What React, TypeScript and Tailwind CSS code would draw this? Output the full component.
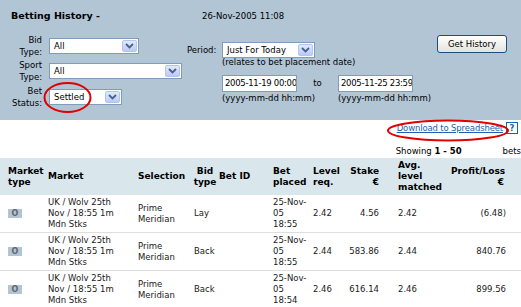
import React from "react";

function Chevron() {
  return (
    <svg width="9" height="6" viewBox="0 0 9 6">
      <path d="M1 1 L4.5 4.5 L8 1" fill="none" stroke="#4d6185" strokeWidth="1.8" />
    </svg>
  );
}

function Select({ cls, value }: { cls: string; value: string }) {
  return (
    <div className={"flex h-[16px] items-center border border-[#7f9db9] bg-white " + cls}>
      <div className="flex-1 whitespace-nowrap pl-[4px] leading-[12px]">{value}</div>
      <div className="mr-[1px] flex h-[12px] w-[15px] items-center justify-center rounded-[2px] border border-[#b2c5f2] bg-linear-to-b from-[#e1e9fd] to-[#b8cbf6]">
        <Chevron />
      </div>
    </div>
  );
}

function Label({ a, b }: { a: string; b: string }) {
  return (
    <div className="w-[44px] pr-[2px] text-right leading-[12px]">
      {a}
      <br />
      {b}
    </div>
  );
}

const rows = [
  { bid: "Lay", placed: "18:55", lvl: "2.42", stake: "4.56", avg: "2.42", pl: "(6.48)" },
  { bid: "Back", placed: "18:55", lvl: "2.44", stake: "583.86", avg: "2.44", pl: "840.76" },
  { bid: "Back", placed: "18:54", lvl: "2.46", stake: "616.14", avg: "2.46", pl: "899.56" },
];

const grid =
  "grid grid-cols-[40px_90px_53px_28px_54px_40px_30px_36px_72px_56px] pl-[8px] items-center";

export default function App() {
  return (
    <div className="relative h-[307px] w-[521px] overflow-hidden bg-white font-['DejaVu_Sans',sans-serif] text-[8.5px] leading-[11px] text-black">
      <div className="h-[120px] bg-[#b1c5d5]">
        <div className="flex pt-[10px]">
          <div className="w-[202px] pl-[11px] text-[9.5px] font-bold leading-[12px]">Betting History -</div>
          <div className="leading-[12px]">26-Nov-2005 11:08</div>
        </div>
        <div className="mt-[12px] flex">
          <div className="flex w-[187px] flex-col">
            <div className="flex h-[25px] items-start">
              <Label a="Bid" b="Type:" />
              <Select cls="ml-[5px] mt-[4px] w-[90px]" value="All" />
            </div>
            <div className="flex h-[26px] items-start">
              <Label a="Sport" b="Type:" />
              <Select cls="ml-[5px] mt-[4px] w-[133px]" value="All" />
            </div>
            <div className="flex h-[26px] items-start">
              <Label a="Bet" b="Status:" />
              <Select cls="ml-[5px] mt-[4px] w-[73px]" value="Settled" />
            </div>
          </div>
          <div className="flex w-[250px] flex-col">
            <div className="mt-[8px] flex h-[16px] items-center">
              <div className="w-[35px] leading-[12px]">Period:</div>
              <Select cls="w-[93px]" value="Just For Today" />
            </div>
            <div className="-mt-[1px] whitespace-nowrap pl-[35px]">(relates to bet placement date)</div>
            <div className="mt-[7px] flex items-center pl-[35px]">
              <div className="flex h-[17px] w-[75px] items-center overflow-hidden whitespace-nowrap border border-[#7f9db9] bg-white pl-[2px] tracking-[-0.3px]">
                2005-11-19 00:00
              </div>
              <div className="w-[41px] text-center">to</div>
              <div className="flex h-[17px] w-[75px] items-center overflow-hidden whitespace-nowrap border border-[#7f9db9] bg-white pl-[2px] tracking-[-0.3px]">
                2005-11-25 23:59
              </div>
            </div>
            <div className="mt-[1px] flex whitespace-nowrap pl-[35px]">
              <div className="w-[116px]">(yyyy-mm-dd hh:mm)</div>
              <div>(yyyy-mm-dd hh:mm)</div>
            </div>
          </div>
          <div className="mt-[1px]">
            <div className="flex h-[18px] w-[70px] items-center justify-center rounded-[3px] border border-[#1c4f7e] bg-linear-to-b from-white to-[#e4e4dc]">
              Get History
            </div>
          </div>
        </div>
      </div>

      <div className="mt-[2px] flex items-center justify-end pr-[3px] leading-[12px]">
        <span className="tracking-[-0.15px] text-[#1f5fb0] underline">Download to Spreadsheet</span>
        <span className="ml-[3px] flex h-[12px] w-[12px] items-center justify-center border border-[#1f5fb0] bg-white font-bold text-[#1f5fb0]">
          ?
        </span>
      </div>
      <div className="mt-[11px] flex leading-[12px]">
        <div className="w-[396px]" />
        <div className="w-[107px]">
          Showing <span className="font-bold">1 - 50</span>
        </div>
        <div>bets</div>
      </div>

      <div className={grid + " mt-[1px] h-[37px] bg-[#d9e6eb] text-[9px] font-bold"}>
        <div>
          Market
          <br />
          type
        </div>
        <div>Market</div>
        <div>Selection</div>
        <div className="text-center">
          Bid
          <br />
          type
        </div>
        <div>Bet ID</div>
        <div>
          Bet
          <br />
          placed
        </div>
        <div>
          Level
          <br />
          req.
        </div>
        <div className="text-right">
          Stake
          <br />€
        </div>
        <div className="pl-[19px]">
          Avg.
          <br />
          level
          <br />
          matched
        </div>
        <div className="pr-[3px] text-right">
          Profit/Loss
          <br />€
        </div>
      </div>

      {rows.map((r, i) => (
        <div key={i} className={grid + " h-[38px] border-b border-[#dedede] text-[#1a1a1a]"}>
          <div>
            <span className="inline-flex h-[9px] w-[14px] items-center justify-center bg-[#b1c5d5] text-[8px] font-bold text-[#666]">
              O
            </span>
          </div>
          <div>
            UK / Wolv 25th
            <br />
            Nov / 18:55 1m
            <br />
            Mdn Stks
          </div>
          <div>
            Prime
            <br />
            Meridian
          </div>
          <div className="pl-[3px]">{r.bid}</div>
          <div />
          <div>
            25-Nov-
            <br />
            05
            <br />
            {r.placed}
          </div>
          <div>{r.lvl}</div>
          <div className="text-right">{r.stake}</div>
          <div className="pl-[19px]">{r.avg}</div>
          <div className="pr-[1px] text-right">{r.pl}</div>
        </div>
      ))}

      <svg className="pointer-events-none absolute left-0 top-0" width="521" height="307">
        <ellipse cx="67.5" cy="97.5" rx="23" ry="14.5" fill="none" stroke="#e00000" strokeWidth="2" />
        <ellipse cx="448" cy="130.5" rx="60" ry="10" fill="none" stroke="#e00000" strokeWidth="2" />
      </svg>
    </div>
  );
}
